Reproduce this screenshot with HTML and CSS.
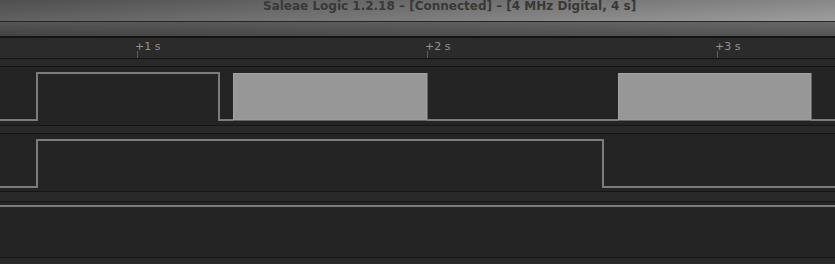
FILE: index.html
```html
<!DOCTYPE html>
<html>
<head>
  <title>Saleae Logic</title>
  <link rel="stylesheet" href="styles.css">
</head>
<body>
  <div class="titlebar">
    <span class="title">Saleae Logic 1.2.18 – [Connected] – [4 MHz Digital, 4 s]</span>
  </div>
  <div class="toolbar"></div>

  <div class="ruler">
    <span class="mark">+1 s</span>
    <span class="mark">+2 s</span>
    <span class="mark last">+3 s</span>
  </div>
  <div class="gap"></div>

  <div class="channel ch0">
    <svg width="835" height="58" viewBox="0 0 835 58">
      <polyline class="wave" points="0,53 37,53 37,6 219,6 219,53 233,53" />
      <rect class="burst" x="233.5" y="6.5" width="193.5" height="46.5" />
      <polyline class="wave" points="427,53 618,53" />
      <rect class="burst" x="618.5" y="6.5" width="192.5" height="46.5" />
      <polyline class="wave" points="811,53 835,53" />
    </svg>
  </div>
  <div class="gap"></div>

  <div class="channel ch1">
    <svg width="835" height="57" viewBox="0 0 835 57">
      <polyline class="wave" points="0,53 37,53 37,6 603,6 603,53 835,53" />
    </svg>
  </div>
  <div class="gap wide"></div>

  <div class="channel ch2">
    <svg width="835" height="55" viewBox="0 0 835 55">
      <polyline class="wave" points="0,4 835,4" />
    </svg>
  </div>
  <div class="gap"></div>
</body>
</html>
```

FILE: styles.css
```css
* {
  margin: 0;
  padding: 0;
  box-sizing: border-box;
}

body {
  background-color: #242424;
  font-family: 'Liberation Sans', Arial, sans-serif;
  overflow: hidden;
}

.titlebar {
  height: 22px;
  border-bottom: 1px solid #262626;
  background-image:
    linear-gradient(rgba(0, 0, 0, 0.12), rgba(255, 255, 255, 0.04)),
    linear-gradient(to right, #5a5a5a, #787878 50%, #9a9a9a);
  padding-left: 263px;
  overflow: hidden;
}

.title {
  display: block;
  margin-top: -1px;
  font-family: 'DejaVu Sans', sans-serif;
  font-size: 12px;
  font-weight: bold;
  color: #383838;
  white-space: nowrap;
}

.toolbar {
  height: 16px;
  border-bottom: 2px solid #141414;
  background-image:
    linear-gradient(rgba(255, 255, 255, 0.06), rgba(0, 0, 0, 0.1)),
    linear-gradient(to right, #4a4a4a, #565656 60%, #5e5e5e);
}

.ruler {
  height: 21px;
  border-bottom: 1px solid #141414;
  background-color: #2b2b2b;
  display: flex;
  padding-left: 135px;
  overflow: hidden;
}

.mark {
  width: 290px;
  flex: none;
  padding-top: 2px;
  font-family: 'DejaVu Sans', sans-serif;
  font-size: 11px;
  color: #929292;
  position: relative;
}

.mark.last {
  width: auto;
}

.mark::after {
  content: '';
  position: absolute;
  left: 2px;
  top: 13px;
  width: 1px;
  height: 7px;
  background-color: #5e5e5e;
}

.gap {
  height: 8px;
  border-bottom: 1px solid #161616;
  background-color: #292929;
}

.gap.wide {
  height: 10px;
}

.channel {
  background-color: #242424;
  border-bottom: 1px solid #161616;
}

.channel svg {
  display: block;
}

.ch0 {
  height: 59px;
}

.ch1 {
  height: 58px;
}

.ch2 {
  height: 56px;
}

.wave {
  fill: none;
  stroke: #7c7c7c;
  stroke-width: 2;
}

.burst {
  fill: #979797;
  stroke: #a2a2a2;
  stroke-width: 1;
}
```
